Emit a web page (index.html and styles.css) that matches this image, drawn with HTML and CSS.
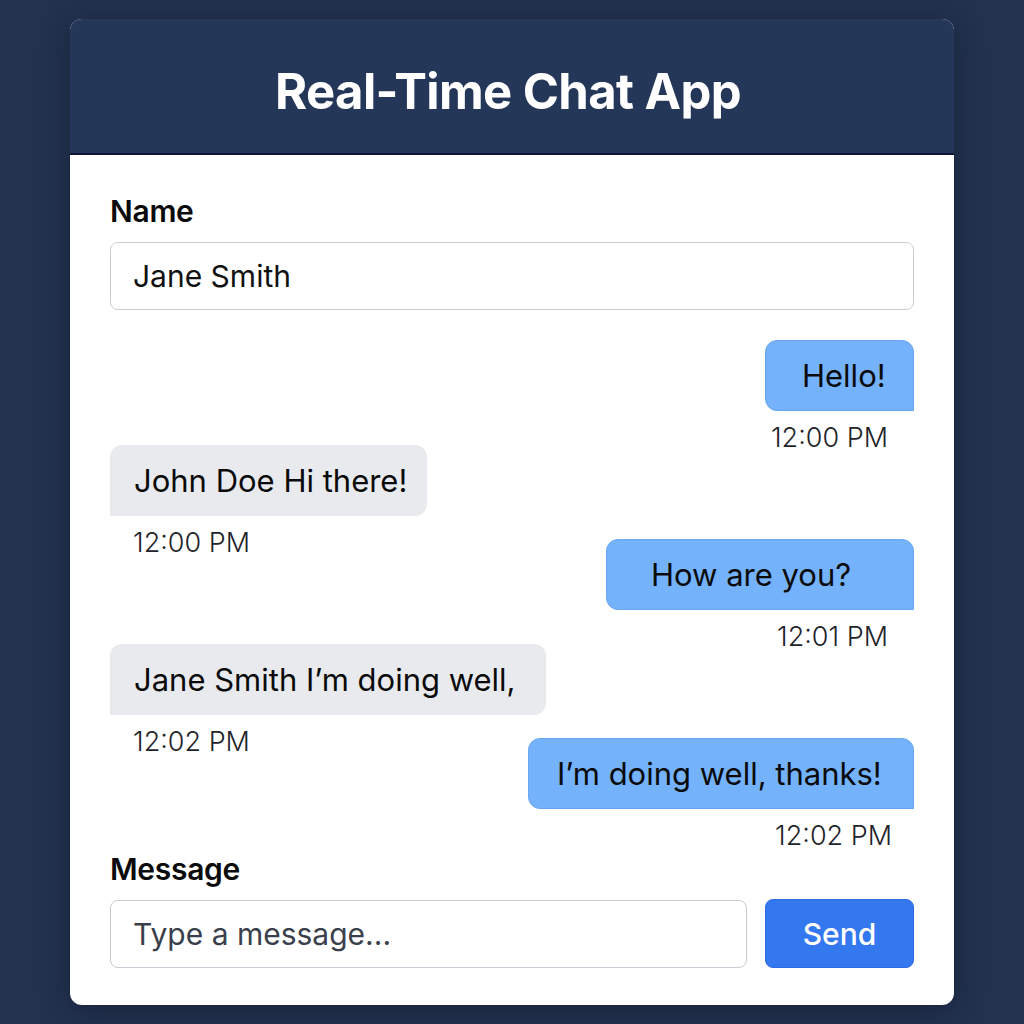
FILE: index.html
```html
<!DOCTYPE html>
<html lang="en">
<head>
<meta charset="utf-8">
<title>Real-Time Chat App</title>
<link rel="stylesheet" href="styles.css">
</head>
<body>
  <main class="card">
    <header class="card-header">
      <h1 class="title">Real-Time Chat App</h1>
    </header>
    <section class="card-body">
      <label class="field-label" for="name">Name</label>
      <input class="text-input" id="name" type="text" value="Jane Smith">

      <div class="messages">
        <div class="msg msg-out">
          <div class="bubble bubble-out w-hello">Hello!</div>
          <div class="time">12:00 PM</div>
        </div>
        <div class="msg msg-in">
          <div class="bubble bubble-in">John Doe Hi there!</div>
          <div class="time">12:00 PM</div>
        </div>
        <div class="msg msg-out">
          <div class="bubble bubble-out w-how">How are you?</div>
          <div class="time">12:01 PM</div>
        </div>
        <div class="msg msg-in">
          <div class="bubble bubble-in w-jane">Jane Smith I’m doing well,</div>
          <div class="time">12:02 PM</div>
        </div>
        <div class="msg msg-out">
          <div class="bubble bubble-out w-thanks">I’m doing well, thanks!</div>
          <div class="time time-last">12:02 PM</div>
        </div>
      </div>

      <label class="field-label" for="message">Message</label>
      <div class="composer">
        <input class="text-input composer-input" id="message" type="text" placeholder="Type a message...">
        <button class="send-btn" type="button">Send</button>
      </div>
    </section>
  </main>
</body>
</html>
```
FILE: styles.css
```css
* { box-sizing: border-box; }

html, body {
  margin: 0;
  padding: 0;
}

body {
  background: #22324f;
  font-family: Inter, "Noto Sans", "Liberation Sans", sans-serif;
  color: #111;
  padding: 19px 70px 0;
  min-height: 1024px;
}

.card {
  width: 884px;
  background: #ffffff;
  border-radius: 12px;
  overflow: hidden;
  box-shadow: 0 6px 28px rgba(10, 18, 36, 0.45);
}

.card-header {
  background: #253758;
  height: 136px;
  display: flex;
  align-items: center;
  justify-content: center;
  border-bottom: 2px solid #0d1838;
  padding-top: 10px;
  padding-right: 8px;
}

.title {
  margin: 0;
  color: #ffffff;
  font-size: 49px;
  font-weight: 700;
  letter-spacing: -0.6px;
  line-height: 1;
}

.card-body {
  padding: 40px 40px 37px;
  display: flex;
  flex-direction: column;
}

.field-label {
  font-size: 30px;
  line-height: 32px;
  font-weight: 600;
  letter-spacing: -0.3px;
  color: #0b0b0b;
  margin-bottom: 15px;
}

.text-input {
  height: 68px;
  width: 100%;
  border: 1.5px solid #c6ccd4;
  border-radius: 8px;
  padding: 0 22px;
  font-family: Inter, "Noto Sans", sans-serif;
  font-size: 30px;
  color: #111;
  background: #fff;
  outline: none;
}

.text-input::placeholder {
  color: #3a404b;
  opacity: 1;
}

.messages {
  margin-top: 30px;
  margin-bottom: 10px;
  display: flex;
  flex-direction: column;
}

.msg {
  display: flex;
  flex-direction: column;
}

.msg-out {
  align-items: flex-end;
  margin-bottom: -5px;
}

.msg-in {
  align-items: flex-start;
  margin-bottom: -16px;
}

.bubble {
  height: 71px;
  display: flex;
  align-items: center;
  font-size: 31px;
  color: #0a0a0a;
  white-space: nowrap;
}

.bubble-out {
  background: #74b2fb;
  border: 1px solid #69a6ef;
  border-radius: 12px 12px 0 12px;
  justify-content: center;
  padding: 0 30px;
}

.bubble-in {
  background: #e8eaee;
  border-radius: 12px 12px 12px 0;
  padding: 0 20px 0 24px;
}

.w-hello { width: 149px; padding-left: 36px; justify-content: flex-start; }
.w-how { width: 308px; padding-left: 44px; justify-content: flex-start; }
.w-thanks { width: 386px; padding-left: 28px; justify-content: flex-start; }
.w-jane { width: 436px; }

.time {
  font-size: 27px;
  line-height: 24px;
  font-weight: 300;
  margin-top: 15px;
  color: #1f232a;
}

.msg-out .time { padding-right: 26px; }
.msg-out .time-last { padding-right: 22px; }
.msg-in .time { padding-left: 23px; }

.composer {
  display: flex;
  gap: 18px;
}

.composer-input {
  flex: 1;
}

.send-btn {
  width: 149px;
  height: 69px;
  margin-top: -1px;
  background: #3478f0;
  border: 1px solid #2f6be0;
  border-radius: 8px;
  color: #ffffff;
  font-family: Inter, "Noto Sans", sans-serif;
  font-size: 30px;
  font-weight: 500;
}
```
